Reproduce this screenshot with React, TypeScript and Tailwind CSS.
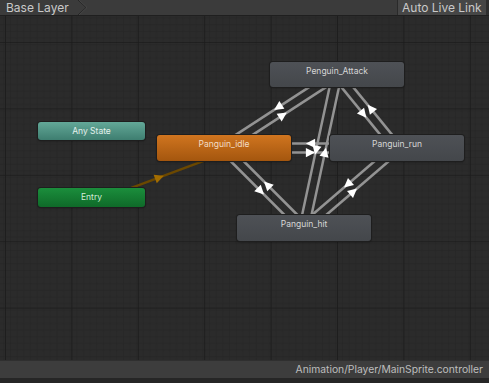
import React from "react";

type Pt = { x: number; y: number };

const centers: Record<string, Pt> = {
  attack: { x: 337, y: 74.5 },
  idle: { x: 224, y: 148 },
  run: { x: 397, y: 148 },
  hit: { x: 304, y: 228 },
  any: { x: 91.5, y: 131 },
  entry: { x: 91.5, y: 197.5 },
};

// each pair is drawn as two lines, one per direction, shifted to the right of travel
const transitions: [string, string][] = [
  ["idle", "attack"],
  ["attack", "idle"],
  ["idle", "run"],
  ["run", "idle"],
  ["idle", "hit"],
  ["hit", "idle"],
  ["run", "attack"],
  ["attack", "run"],
  ["run", "hit"],
  ["hit", "run"],
  ["attack", "hit"],
  ["hit", "attack"],
];

const Transition = ({ from, to, color, arrow, off }: { from: Pt; to: Pt; color: string; arrow: string; off: number }) => {
  const dx = to.x - from.x;
  const dy = to.y - from.y;
  const len = Math.hypot(dx, dy);
  const ux = dx / len;
  const uy = dy / len;
  const ox = -uy * off;
  const oy = ux * off;
  const mx = (from.x + to.x) / 2 + ox;
  const my = (from.y + to.y) / 2 + oy;
  const s = 4.6;
  const tip = `${mx + ux * s},${my + uy * s}`;
  const b1 = `${mx - ux * s - uy * s},${my - uy * s + ux * s}`;
  const b2 = `${mx - ux * s + uy * s},${my - uy * s - ux * s}`;
  return (
    <g>
      <line x1={from.x + ox} y1={from.y + oy} x2={to.x + ox} y2={to.y + oy} stroke={color} strokeWidth={2.5} />
      <polygon points={`${tip} ${b1} ${b2}`} fill={arrow} />
    </g>
  );
};

const Node = ({ label, className }: { label: string; className: string }) => (
  <div
    className={`absolute rounded-[3px] text-center text-[8.5px] leading-[18px] shadow-[0_0_0_1px_#1e1e1e,0_1px_2px_rgba(0,0,0,0.5)] ${className}`}
  >
    {label}
  </div>
);

export default function App() {
  return (
    <div className="w-[489px] h-[383px] flex flex-col bg-[#2a2a2a] overflow-hidden font-['Inter','Roboto',sans-serif] select-none">
      {/* toolbar */}
      <div className="relative h-[16px] flex items-stretch bg-[#3b3b3b] border-b border-[#1f1f1f] text-[12px] text-[#c9c9c9] z-10">
        <div className="relative pl-[6px] pr-[20px] leading-[15px]">
          Base Layer
          <svg className="absolute right-0 top-0" width="14" height="15" viewBox="0 0 14 15">
            <polyline points="3,0 11,7.5 3,15" fill="none" stroke="#262626" strokeWidth="1" />
            <polyline points="4,0 12,7.5 4,15" fill="none" stroke="#4a4a4a" strokeWidth="0.8" />
          </svg>
        </div>
        <div className="flex-1" />
        <div className="w-[89px] pl-[4px] bg-[#464646] border-l border-[#2a2a2a] leading-[15px]">Auto Live Link</div>
        <div className="w-[3px] bg-[#2e2e2e]" />
      </div>

      {/* graph canvas */}
      <div className="relative flex-1 overflow-hidden">
        <div className="absolute left-0 top-[-16px] w-[489px] h-[383px]">
          <svg className="absolute inset-0" width="489" height="383">
            <defs>
              <pattern id="minor" x="5" y="42" width="6.64" height="6.64" patternUnits="userSpaceOnUse">
                <path d="M0 0 H6.64 M0 0 V6.64" stroke="#242424" strokeWidth="1" fill="none" />
              </pattern>
              <pattern id="major" x="5" y="42" width="66.4" height="66.4" patternUnits="userSpaceOnUse">
                <rect width="66.4" height="66.4" fill="url(#minor)" />
                <path d="M0 0 H66.4 M0 0 V66.4" stroke="#1b1b1b" strokeWidth="1.6" fill="none" />
              </pattern>
            </defs>
            <rect width="489" height="383" fill="#2b2b2b" />
            <rect width="489" height="383" fill="url(#major)" />
            {transitions.map(([a, b]) => (
              <Transition key={a + b} from={centers[a]} to={centers[b]} color="#939393" arrow="#ffffff" off={4.6} />
            ))}
            <Transition from={centers.entry} to={centers.idle} color="#6b4800" arrow="#a36d00" off={5} />
          </svg>

          <Node label="Any State" className="left-[38px] top-[122px] w-[107px] h-[18px] bg-linear-to-b from-[#63a898] to-[#3e7e70] text-[#e4f1ec]" />
          <Node label="Entry" className="left-[38px] top-[188px] w-[107px] h-[19px] bg-linear-to-b from-[#1b8e3c] to-[#0f6a29] text-[#d3ecd8]" />
          <Node label="Panguin_idle" className="left-[157px] top-[135px] w-[134px] h-[26px] bg-linear-to-b from-[#d0751f] to-[#a4560e] text-[#f2dcc6]" />
          <Node label="Penguin_Attack" className="left-[270px] top-[62px] w-[134px] h-[25px] bg-linear-to-b from-[#4e5156] to-[#44474b] text-[#d6d6d6]" />
          <Node label="Panguin_run" className="left-[330px] top-[135px] w-[134px] h-[26px] bg-linear-to-b from-[#4e5156] to-[#44474b] text-[#d6d6d6]" />
          <Node label="Panguin_hit" className="left-[237px] top-[215px] w-[134px] h-[26px] bg-linear-to-b from-[#4e5156] to-[#44474b] text-[#d6d6d6]" />
        </div>
      </div>

      {/* status bar */}
      <div className="h-[18px] flex items-center justify-end pr-[6px] bg-[#3d3d3d] border-t border-[#2f2f2f] text-[10.3px] text-[#bebebe] z-10">
        Animation/Player/MainSprite.controller
      </div>
      <div className="h-[5px] bg-[#262626]" />
    </div>
  );
}
